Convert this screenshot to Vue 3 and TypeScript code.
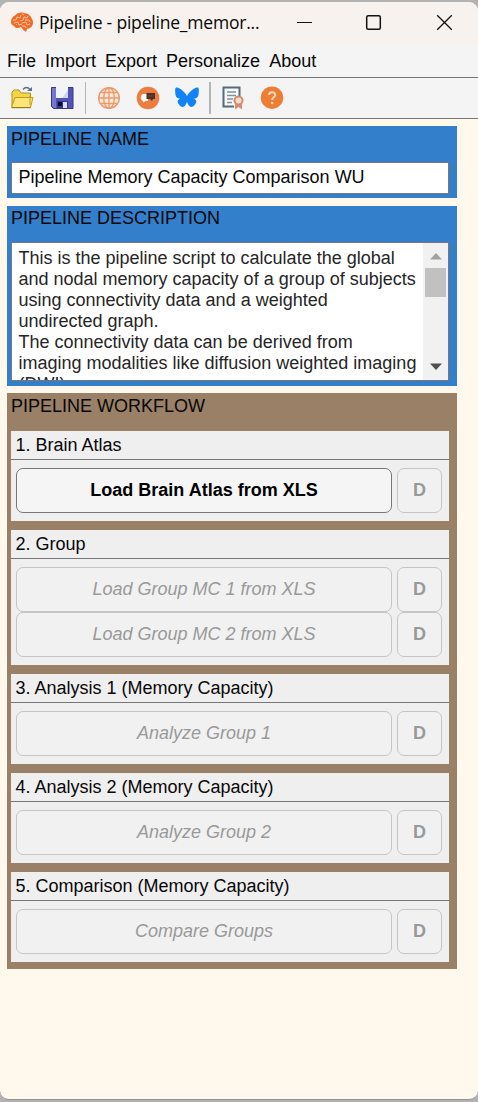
<script setup lang="ts">
interface Section {
  title: string
  steps: { label: string; enabled: boolean }[]
}

const menus: string[] = ['File', 'Import', 'Export', 'Personalize', 'About']

const description: string[] = [
  'This is the pipeline script to calculate the global',
  'and nodal memory capacity of a group of subjects',
  'using connectivity data and a weighted',
  'undirected graph.',
  'The connectivity data can be derived from',
  'imaging modalities like diffusion weighted imaging',
  '(DWI).',
]

const sections: Section[] = [
  { title: '1. Brain Atlas', steps: [{ label: 'Load Brain Atlas from XLS', enabled: true }] },
  {
    title: '2. Group',
    steps: [
      { label: 'Load Group MC 1 from XLS', enabled: false },
      { label: 'Load Group MC 2 from XLS', enabled: false },
    ],
  },
  { title: '3. Analysis 1 (Memory Capacity)', steps: [{ label: 'Analyze Group 1', enabled: false }] },
  { title: '4. Analysis 2 (Memory Capacity)', steps: [{ label: 'Analyze Group 2', enabled: false }] },
  { title: '5. Comparison (Memory Capacity)', steps: [{ label: 'Compare Groups', enabled: false }] },
]
</script>

<template>
  <div class="desktop">
    <div class="window">
      <header class="titlebar">
        <svg class="brain" width="24" height="22" viewBox="0 0 24 22">
          <path d="M1 10C1 7 2 5 5 3.500C7 1 11 0 14 1C18 1 21 4 22 7C24 10 23 14 20 16L17 17L16 20L13.500 18L11 15C8 17 5 16 4 14C2 13 1 12 1 10Z" fill="#f26a25" />
          <path d="M3 8L6 8L7 5L10 6L11 3M4 11L8 10L9 13L12 12M10 9L13 8L14 5L17 6L18 4M12 11L16 10L17 13L20 12M15 8L19 8L20 10M12 14L15 14L16 16M6 13L7 12M12 1.5L14 3" fill="none" stroke="#fbdccb" stroke-width=".8" />
        </svg>
        <span class="title">Pipeline - pipeline_memor...</span>
        <svg class="controls" width="160" height="20" viewBox="0 0 160 20" fill="none" stroke="#111">
          <path d="M0 9.500H15" stroke-width="1.1" />
          <rect x="69.7" y="2.7" width="13.6" height="13.6" rx="1.5" stroke-width="1.5" />
          <path d="M140.2 2.2L154.8 16.8M154.8 2.2L140.2 16.8" stroke-width="1.3" />
        </svg>
      </header>

      <nav class="menubar">
        <span v-for="m in menus" :key="m" class="menu">{{ m }}</span>
      </nav>

      <div class="toolbar">
        <svg class="tool open" width="24" height="24" viewBox="0 0 24 24">
          <path d="M2 21V6L4 4H9L11 7H20.500V12" fill="#f3d548" stroke="#b39324" />
          <path d="M1.500 21.500L5 11.500H23L20.500 21.500Z" fill="#fbe576" stroke="#c19a20" />
          <path d="M2 21.700H20.500" stroke="#94700f" />
          <path d="M20 9.500V19" stroke="#c19a20" />
          <path d="M13 3.500C15 .8 18 .8 20 3.500" fill="none" stroke="#55738c" stroke-width="1.3" />
          <path d="M17 5H22V1Z" fill="#55738c" />
        </svg>
        <svg class="tool save" width="24" height="24" viewBox="0 0 24 24">
          <path d="M1.500 1.500H23V22.500H3.500L1.500 20.500Z" fill="#5353b7" stroke="#373788" />
          <path d="M2 2H6V22H4L2 20Z" fill="#7777cf" />
          <rect x="6" y="1" width="12" height="11" fill="#f0f3fc" />
          <path d="M12 12L18 4V12Z" fill="#cbd5ef" />
          <rect x="7" y="15" width="11" height="7" fill="#333a91" />
          <rect x="13" y="16" width="4" height="6" fill="#dcdcf3" />
          <rect x="8" y="16" width="4" height="4" fill="#06082b" />
        </svg>
        <i class="divider"></i>
        <svg class="tool globe" width="24" height="24" viewBox="0 0 24 24" fill="none" stroke="#ed9a6b" stroke-width="1.4">
          <circle cx="12" cy="12" r="10.3" fill="#faeadd" />
          <ellipse cx="12" cy="12" rx="5.300" ry="10.300" />
          <path d="M12 1.700V22.300M1.700 12H22.300M3.300 6.500H20.700M3.300 17.500H20.700" />
        </svg>
        <svg class="tool chat" width="24" height="24" viewBox="0 0 24 24">
          <circle cx="12" cy="12" r="11.300" fill="#ec7d3e" />
          <path d="M7 8H12V15H9.500L7 16.500V15C4 14 4 9 7 8Z" fill="#fffaf5" />
          <path d="M10.500 7H19V13H17L16 15L14 13H10.500Z" fill="#493228" />
          <path d="M12 10H17" stroke="#6d4c3d" />
        </svg>
        <svg class="tool butterfly" width="26" height="24" viewBox="0 0 26 24">
          <path d="M13 10C11 6 6 2 3 1.500C1 1.500 1 3 1.300 7C1.600 11 2.800 12.500 6.500 12.500C3 14 3 16 5 18.500C9 23.500 11.500 20 13 16C14.500 20 17 23.500 21 18.500C23 16 23 14 19.500 12.500C23.200 12.500 24.400 11 24.700 7C25 3 25 1.500 23 1.500C20 2 15 6 13 10Z" fill="#1083f6" />
        </svg>
        <i class="divider second"></i>
        <svg class="tool license" width="24" height="24" viewBox="0 0 24 24" fill="none">
          <path d="M18.500 10V1.500H2.500V20.500H13" fill="#f7fafc" stroke="#596978" stroke-width="2" />
          <path d="M6 6H15M6 9.500H15M6 13H12M6 16.500H11" stroke="#81909b" stroke-width="1.400" />
          <path d="M14 17V23.500L17.500 21L21 23.500V17" fill="#d58c72" />
          <circle cx="17.500" cy="14.500" r="4" fill="#f4ded4" stroke="#d38b70" stroke-width="2" />
        </svg>
        <svg class="tool help" width="24" height="24" viewBox="0 0 24 24" fill="none">
          <circle cx="12" cy="11.700" r="11.200" fill="#ee7d35" />
          <path d="M9 9C9 5.300 15.300 5.300 15.200 9C15.100 11.300 12.200 11.500 12.200 14" stroke="#fbd9bf" stroke-width="2" />
          <circle cx="12.200" cy="17" r="1.300" fill="#fbd9bf" />
        </svg>
      </div>

      <main class="canvas">
        <section class="panel name-panel">
          <h2>PIPELINE NAME</h2>
          <div class="field name">Pipeline Memory Capacity Comparison WU</div>
        </section>

        <section class="panel description-panel">
          <h2>PIPELINE DESCRIPTION</h2>
          <div class="field description">
            <div class="copy">
              <div v-for="line in description" :key="line">{{ line }}</div>
            </div>
            <div class="scrollbar">
              <svg width="12" height="7" viewBox="0 0 12 7"><path d="M0 6.500L6 0L12 6.500Z" fill="#a2a2a2" /></svg>
              <div class="track"><div class="thumb"></div></div>
              <svg width="12" height="7" viewBox="0 0 12 7"><path d="M0 .5L6 7L12 .5Z" fill="#505050" /></svg>
            </div>
          </div>
        </section>

        <section class="panel workflow-panel">
          <h2>PIPELINE WORKFLOW</h2>
          <div class="sections">
            <article v-for="s in sections" :key="s.title" class="section">
              <h3>{{ s.title }}</h3>
              <div class="steps">
                <div v-for="step in s.steps" :key="step.label" class="step">
                  <button class="run" :class="{ enabled: step.enabled }" :disabled="!step.enabled">{{ step.label }}</button>
                  <button class="detail" disabled>D</button>
                </div>
              </div>
            </article>
          </div>
        </section>
      </main>
    </div>
  </div>
</template>

<style>
body {
  margin: 0;
}
</style>

<style scoped>
* {
  box-sizing: border-box;
}
.desktop {
  width: 478px;
  height: 1102px;
  padding-top: 2px;
  background: #b3b3b3;
  overflow: hidden;
  font-family: 'Liberation Sans', Arial, sans-serif;
  font-size: 18px;
  color: #080808;
}
.window {
  height: 1098px;
  display: flex;
  flex-direction: column;
  background: #fff8ec;
  border-bottom: 1px solid #929292;
  border-radius: 9px;
  overflow: hidden;
}
.titlebar {
  height: 43px;
  flex: none;
  display: flex;
  align-items: center;
  padding-left: 10px;
  background: #f7f2ee;
}
.brain {
  flex: none;
  margin-bottom: 2px;
}
.title {
  width: 257px;
  margin: 0 0 3px 5px;
  font-family: 'Open Sans', 'Noto Sans', sans-serif;
  font-size: 17.5px;
  letter-spacing: -0.2px;
  line-height: 24px;
  white-space: nowrap;
}
.controls {
  flex: none;
  margin: 0 0 2px 1px;
}
.menubar {
  height: 33px;
  flex: none;
  display: flex;
  gap: 9px;
  padding: 5px 0 0 7px;
  line-height: 22px;
  background: #f4f4f4;
  border-bottom: 1px solid #777;
}
.toolbar {
  height: 41px;
  flex: none;
  display: flex;
  align-items: center;
  padding-left: 10px;
  background: #f4f4f4;
  border-bottom: 1px solid #777;
}
.tool {
  flex: none;
}
.save {
  margin-left: 16px;
}
.divider {
  width: 1px;
  height: 32px;
  margin-left: 11px;
  background: #b5b5b5;
}
.globe {
  margin-left: 11px;
}
.chat {
  margin-left: 15px;
}
.butterfly {
  margin-left: 14px;
}
.divider.second {
  width: 2px;
  margin-left: 9px;
}
.license {
  margin-left: 10px;
}
.help {
  margin-left: 15px;
}
.canvas {
  flex: 1;
  padding: 7px 21px 0 7px;
}
.panel {
  padding: 0 8px 0 4px;
  background: #337fcb;
}
h2 {
  margin: 0;
  height: 36px;
  padding-top: 2px;
  font-size: 18px;
  font-weight: 400;
  line-height: 22px;
}
.name-panel {
  height: 72px;
}
.description-panel {
  height: 180px;
  margin-top: 8px;
}
.description-panel h2 {
  padding-top: 1px;
}
.workflow-panel {
  height: 576px;
  margin-top: 7px;
  background: #9a8067;
}
.workflow-panel h2 {
  height: 38px;
}
.field {
  border: 1px solid #777;
  background: #fff;
}
.name {
  height: 32px;
  padding-left: 6.5px;
  line-height: 29px;
  white-space: nowrap;
}
.description {
  height: 139px;
  display: flex;
  overflow: hidden;
}
.copy {
  flex: 1;
  padding: 5px 0 0 6.5px;
  line-height: 21px;
  white-space: pre;
  color: #262626;
}
.scrollbar {
  width: 25px;
  flex: none;
  display: flex;
  flex-direction: column;
  align-items: center;
  padding: 10px 0;
  background: #f1f1f1;
}
.scrollbar svg {
  flex: none;
}
.track {
  flex: 1;
  padding-top: 8px;
}
.thumb {
  width: 21px;
  height: 29px;
  background: #c1c1c1;
}
.sections {
  display: flex;
  flex-direction: column;
  gap: 9px;
}
.section {
  background: #efefef;
}
h3 {
  margin: 0;
  height: 29px;
  padding-left: 4.5px;
  border-bottom: 1px solid #777;
  font-size: 18px;
  font-weight: 400;
  line-height: 28px;
}
.steps {
  padding: 8px 7px 8px 5px;
}
.step {
  display: flex;
  gap: 5px;
}
button {
  height: 45px;
  padding: 0;
  border: 1px solid #c5c5c5;
  border-radius: 7px;
  background: #f1f1f1;
  color: #999;
  font-family: inherit;
  font-size: 18px;
}
.run {
  width: 376px;
  font-style: italic;
}
.run.enabled {
  border-color: #777;
  background: #f5f5f5;
  color: #000;
  font-style: normal;
  font-weight: 700;
}
.detail {
  width: 45px;
  font-weight: 700;
}
</style>
